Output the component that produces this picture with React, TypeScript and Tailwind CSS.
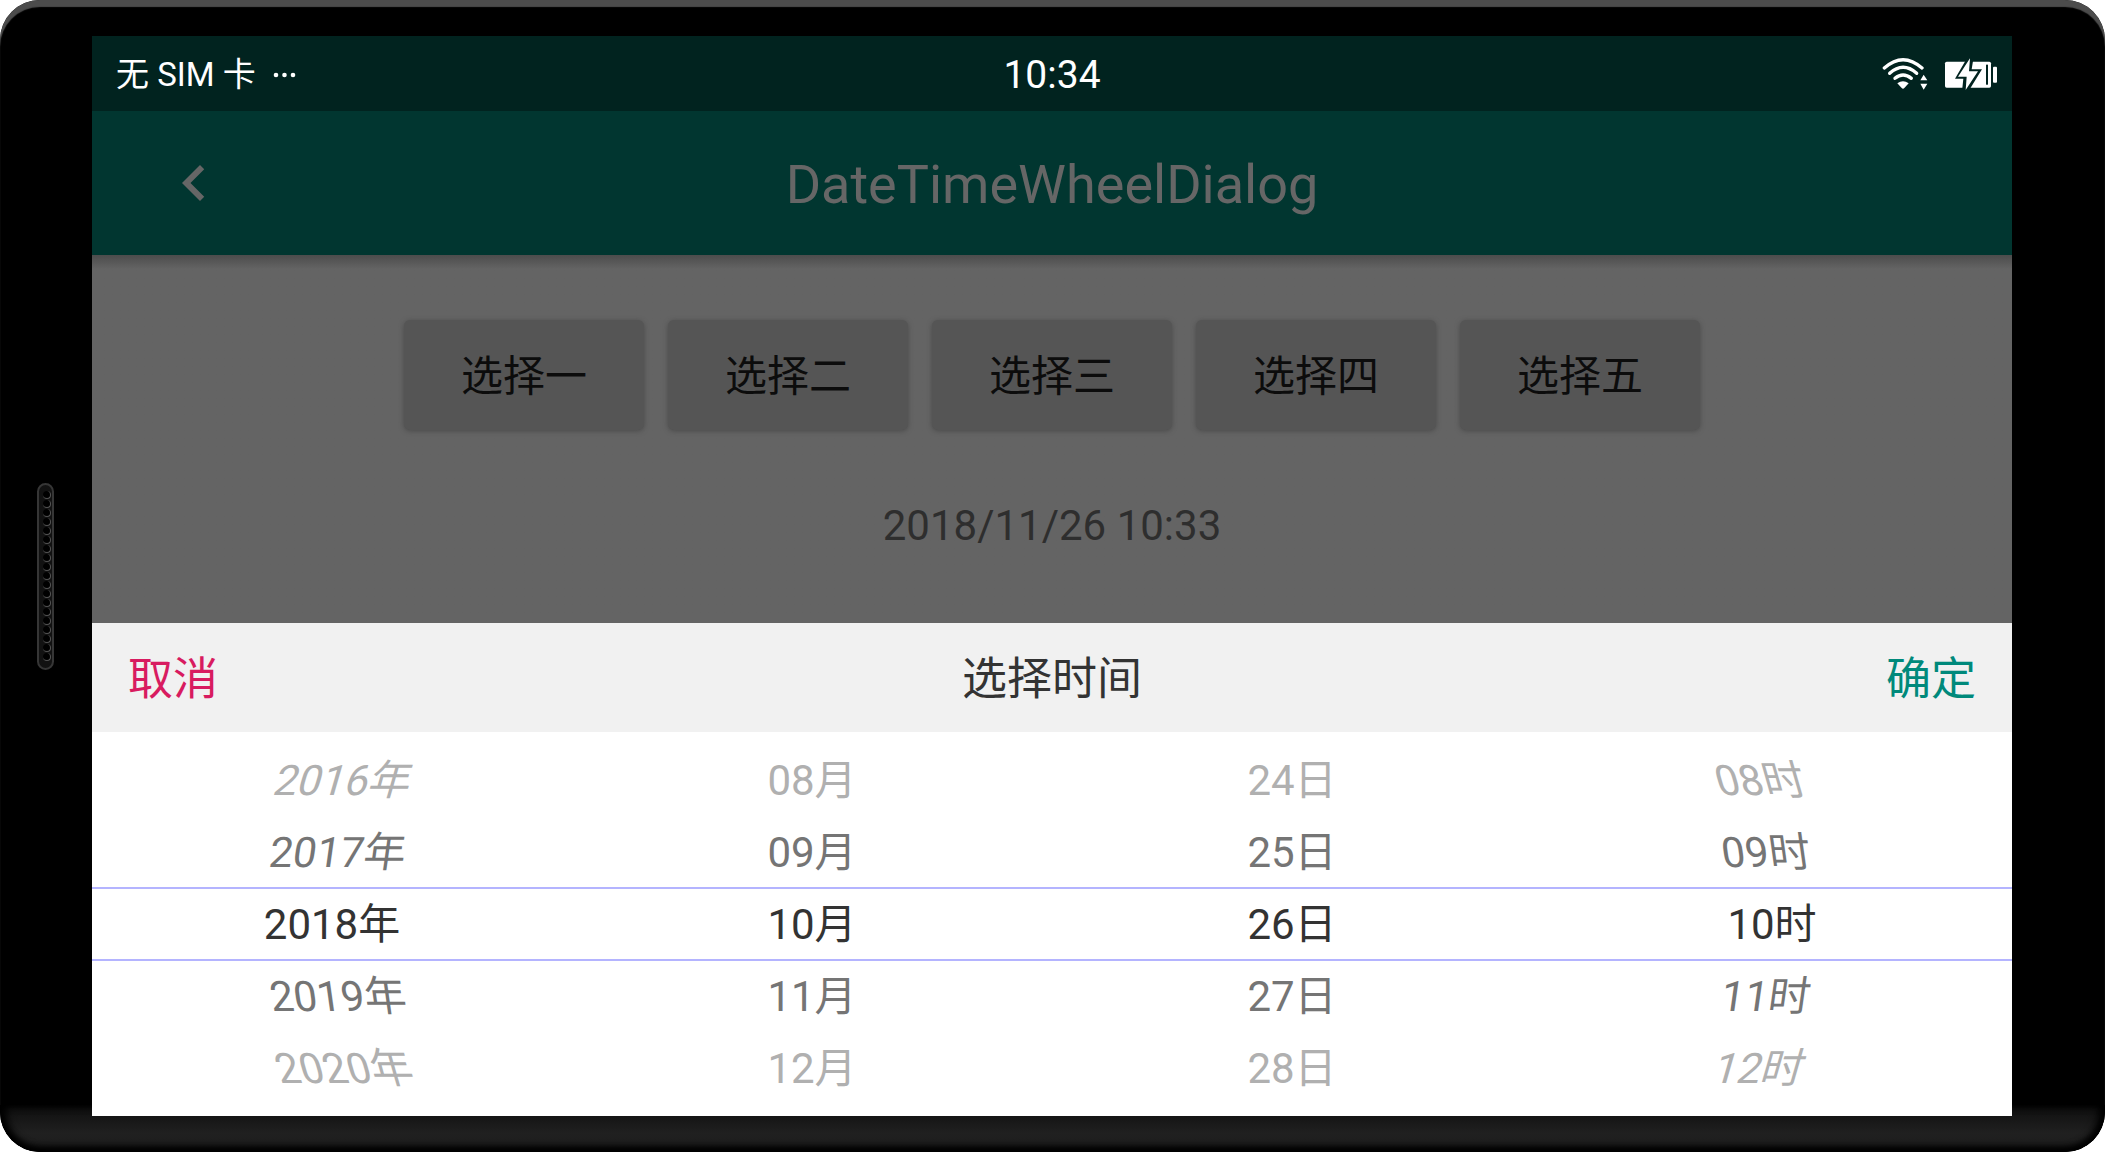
import { useState } from "react";

type WheelData = {
  label: string;
  items: string[];
  side: "start" | "middle" | "end";
};

const wheels: WheelData[] = [
  { label: "年", items: ["2016年", "2017年", "2018年", "2019年", "2020年"], side: "start" },
  { label: "月", items: ["08月", "09月", "10月", "11月", "12月"], side: "middle" },
  { label: "日", items: ["24日", "25日", "26日", "27日", "28日"], side: "middle" },
  { label: "时", items: ["08时", "09时", "10时", "11时", "12时"], side: "end" },
];

const choices = ["选择一", "选择二", "选择三", "选择四", "选择五"];

const rowColors = [
  "text-[#b0b0b0]",
  "text-[#757575]",
  "text-[#333333]",
  "text-[#757575]",
  "text-[#b0b0b0]",
];

// The outer wheels lean towards the middle of the sheet as they turn away.
const rowShapes: Record<WheelData["side"], string[]> = {
  start: ["pl-6 -skew-x-16", "pl-3 -skew-x-8", "", "pl-3 skew-x-8", "pl-6 skew-x-16"],
  middle: ["", "", "", "", ""],
  end: ["pr-6 skew-x-16", "pr-3 skew-x-8", "", "pr-3 -skew-x-8", "pr-6 -skew-x-16"],
};

function Wheel({ data }: { data: WheelData }) {
  return (
    <div role="listbox" aria-label={data.label} className="flex flex-col">
      {data.items.map((item, i) => (
        <button
          key={item}
          type="button"
          role="option"
          aria-selected={i === 2}
          className={`h-18 pt-0.5 text-[42px] leading-16 ${rowColors[i]} ${rowShapes[data.side][i]}`}
        >
          {item}
        </button>
      ))}
    </div>
  );
}

function WifiIcon() {
  return (
    <svg viewBox="38 34 138 99" className="h-[33px] w-[46px]" aria-label="Wi-Fi">
      <g fill="none" stroke="#fff" strokeWidth="10" strokeLinecap="round">
        <path d="M45 67Q101 17 158 67" />
        <path d="M61 83Q101 47 142 83" />
        <path d="M77 98Q101 78 126 98" />
      </g>
      <path fill="#fff" d="M84 113Q101 101 118 113L105 127Q101 131 97 127Z" />
      <path fill="#fff" d="M163 87L153 104H174ZM153 114H174L163 132Z" />
    </svg>
  );
}

function BatteryIcon() {
  return (
    <svg viewBox="222 34 162 99" className="h-[33px] w-[54px]" aria-label="Battery charging">
      <rect x="225" y="48" width="138" height="78" rx="5" fill="#fff" />
      <rect x="369" y="63" width="12" height="48" rx="3" fill="#fff" />
      <rect x="348" y="57" width="6" height="60" fill="#01231f" />
      <path fill="#01231f" d="M286 46L255 99H280L277 128H301L336 71H305L309 46Z" />
      <path fill="#fff" d="M300 38L264 93H290L287 133L324 77H297Z" />
    </svg>
  );
}

function Speaker() {
  return (
    <div className="flex flex-col items-center rounded-full border-2 border-[#363636] bg-[#121212] py-1.5 pr-px pl-1">
      {Array.from({ length: 19 }, (_, i) => (
        <span
          key={i}
          className="mb-px h-2 w-2 rounded-full border-r border-b border-[#555555] bg-black"
        />
      ))}
    </div>
  );
}

export default function App() {
  const [value] = useState("2018/11/26 10:33");
  return (
    <div className="min-h-screen bg-white font-[Roboto,'Noto_Sans_CJK_SC',sans-serif]">
      <div className="relative grid min-h-screen grid-cols-[92px_1fr_93px] overflow-hidden rounded-[40px] bg-black py-9 shadow-[inset_0_7px_1px_#4c4c4c]">
        <div className="absolute inset-x-0 bottom-0 h-[47px] rounded-b-[40px] bg-linear-to-b from-[#0e0e0e] via-[#202020] via-60% to-[#1c1c1c] shadow-[inset_0_-5px_6px_#000,inset_6px_0_8px_#000,inset_-6px_0_8px_#000]" />

        <div className="flex items-center justify-center pr-px">
          <Speaker />
        </div>

        <div className="relative flex flex-col bg-[#646464]">
          <div className="grid h-[75px] grid-cols-[1fr_auto_1fr] items-center bg-[#01231f] text-white">
            <div className="flex items-center gap-4 pt-0.5 pl-6 text-[33px]">
              <span>无 SIM 卡</span>
              <svg viewBox="0 0 24 6" className="h-1.5 w-6" fill="#fff" aria-hidden="true">
                <circle cx="4" cy="3" r="2.3" />
                <circle cx="12.5" cy="3" r="2.3" />
                <circle cx="21" cy="3" r="2.3" />
              </svg>
            </div>
            <div className="pt-1 text-[39px]">10:34</div>
            <div className="flex items-center justify-end gap-4 pr-3.5">
              <WifiIcon />
              <BatteryIcon />
            </div>
          </div>

          <header className="grid h-36 grid-cols-[1fr_auto_1fr] items-center bg-[#013630] px-[66px] text-[#666666]">
            <button type="button" aria-label="返回" className="justify-self-start">
              <svg viewBox="0 0 24 24" className="h-[72px] w-[72px]" fill="currentColor">
                <path d="M15.41 7.41L14 6l-6 6 6 6 1.41-1.41L10.83 12z" />
              </svg>
            </button>
            <h1 className="pt-0.5 text-[54px]">DateTimeWheelDialog</h1>
            <span />
          </header>

          <main className="flex flex-1 flex-col items-center bg-linear-to-b from-[#4c4c4c] to-[#646464] to-[14px] pt-[65px] pb-[72px]">
            <div className="flex gap-6">
              {choices.map((c) => (
                <button
                  key={c}
                  type="button"
                  className="h-[110px] w-60 rounded-md bg-[#555555] pt-0.5 text-[42px] text-[#0c0c0c] shadow-[0_1px_5px_#4a4a4a]"
                >
                  {c}
                </button>
              ))}
            </div>
            <p className="mt-18 text-[42px] leading-12 text-[#2e2e2e]">{value}</p>
          </main>

          <section role="dialog" aria-label="选择时间" className="bg-white">
            <div className="grid h-[109px] grid-cols-[1fr_auto_1fr] items-center bg-[#f1f1f1] px-9 pt-1 text-[45px]">
              <button type="button" className="justify-self-start text-[#d81b60]">
                取消
              </button>
              <h2 className="text-[#333333]">选择时间</h2>
              <button type="button" className="justify-self-end text-[#00897b]">
                确定
              </button>
            </div>
            <div className="relative grid grid-cols-4 py-3">
              {wheels.map((w) => (
                <Wheel key={w.label} data={w} />
              ))}
              <div className="pointer-events-none absolute inset-x-0 top-1/2 h-[74px] -translate-y-1/2 border-y-2 border-[#b4b4ff]" />
            </div>
          </section>
        </div>
        <div />
      </div>
    </div>
  );
}
